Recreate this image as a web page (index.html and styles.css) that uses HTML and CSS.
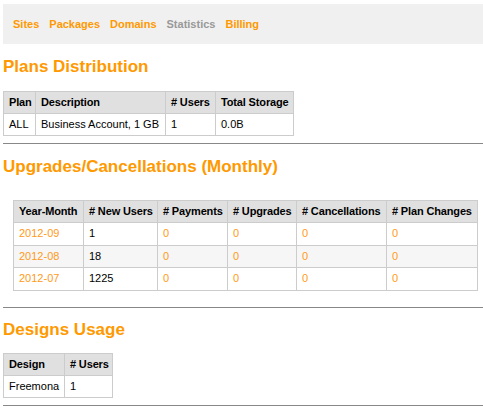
FILE: index.html
```html
<!DOCTYPE html>
<html lang="en">
<head>
  <meta charset="UTF-8">
  <title>Statistics</title>
  <link rel="stylesheet" href="styles.css">
</head>
<body>
  <nav class="topnav">
    <a href="#">Sites</a>
    <a href="#">Packages</a>
    <a href="#">Domains</a>
    <a href="#" class="current">Statistics</a>
    <a href="#">Billing</a>
  </nav>

  <h2 class="section-title first">Plans Distribution</h2>
  <table class="stats plans">
    <colgroup>
      <col class="w32"><col class="w130"><col class="w50"><col class="w78">
    </colgroup>
    <tr><th>Plan</th><th>Description</th><th># Users</th><th>Total Storage</th></tr>
    <tr><td>ALL</td><td>Business Account, 1 GB</td><td>1</td><td>0.0B</td></tr>
  </table>
  <hr class="plans-rule">

  <h2 class="section-title">Upgrades/Cancellations (Monthly)</h2>
  <div class="monthly-wrap">
    <table class="stats monthly">
      <colgroup>
        <col class="w70"><col class="w74"><col class="w70"><col class="w69"><col class="w90"><col class="w91">
      </colgroup>
      <tr><th>Year-Month</th><th># New Users</th><th># Payments</th><th># Upgrades</th><th># Cancellations</th><th># Plan Changes</th></tr>
      <tr><td><a href="#">2012-09</a></td><td>1</td><td><a href="#">0</a></td><td><a href="#">0</a></td><td><a href="#">0</a></td><td><a href="#">0</a></td></tr>
      <tr class="alt"><td><a href="#">2012-08</a></td><td>18</td><td><a href="#">0</a></td><td><a href="#">0</a></td><td><a href="#">0</a></td><td><a href="#">0</a></td></tr>
      <tr><td><a href="#">2012-07</a></td><td>1225</td><td><a href="#">0</a></td><td><a href="#">0</a></td><td><a href="#">0</a></td><td><a href="#">0</a></td></tr>
    </table>
  </div>
  <hr class="monthly-rule">

  <h2 class="section-title">Designs Usage</h2>
  <table class="stats designs">
    <colgroup>
      <col class="w61"><col class="w48">
    </colgroup>
    <tr><th>Design</th><th># Users</th></tr>
    <tr><td>Freemona</td><td>1</td></tr>
  </table>
  <hr class="designs-rule">
</body>
</html>
```

FILE: styles.css
```css
body {
  margin: 4px 0 0 3px;
  font-family: 'Liberation Sans', Arial, Helvetica, sans-serif;
  font-size: 11px;
  color: #000;
  background: #fff;
}
a {
  color: #ff9900;
  text-decoration: none;
}
.topnav {
  display: flex;
  align-items: center;
  gap: 10px;
  height: 40px;
  padding-left: 10px;
  background: #f0f0f0;
}
.topnav a {
  font-weight: bold;
  font-size: 11px;
}
.topnav a.current { color: #999; }

.section-title {
  color: #ff9900;
  font-size: 17px;
  line-height: 20px;
  margin: 13px 0 14px 0;
}

hr {
  border: 0;
  border-top: 1px solid #888;
  height: 0;
  margin: 0;
}
.plans-rule { margin-top: 7px; }
.monthly-rule { margin-top: 16px; }
.designs-rule { margin-top: 7px; }
.monthly-rule + .section-title { margin-top: 12px; margin-bottom: 13px; }

.stats {
  border-collapse: collapse;
  table-layout: fixed;
  font-size: 11px;
}
.stats th, .stats td {
  border: 1px solid #ccc;
  padding: 4px 4px 4px 5px;
  line-height: 13px;
  text-align: left;
  white-space: nowrap;
  overflow: hidden;
}
.stats th {
  background: #e0e0e0;
  font-weight: bold;
  letter-spacing: -0.15px;
}
.stats tr.alt td { background: #f6f6f6; }

.plans { width: 290px; }
.designs { width: 109px; }

.monthly-wrap {
  padding: 10px 0 0 10px;
  margin-top: -1px;
}
.monthly { width: 464px; }
.monthly td { padding-bottom: 4.6px; }
.monthly td a { color: #ff9a1a; }

.w32 { width: 32px; }
.w48 { width: 48px; }
.w50 { width: 50px; }
.w61 { width: 61px; }
.w69 { width: 69px; }
.w70 { width: 70px; }
.w74 { width: 74px; }
.w78 { width: 78px; }
.w90 { width: 90px; }
.w91 { width: 91px; }
.w130 { width: 130px; }
```
